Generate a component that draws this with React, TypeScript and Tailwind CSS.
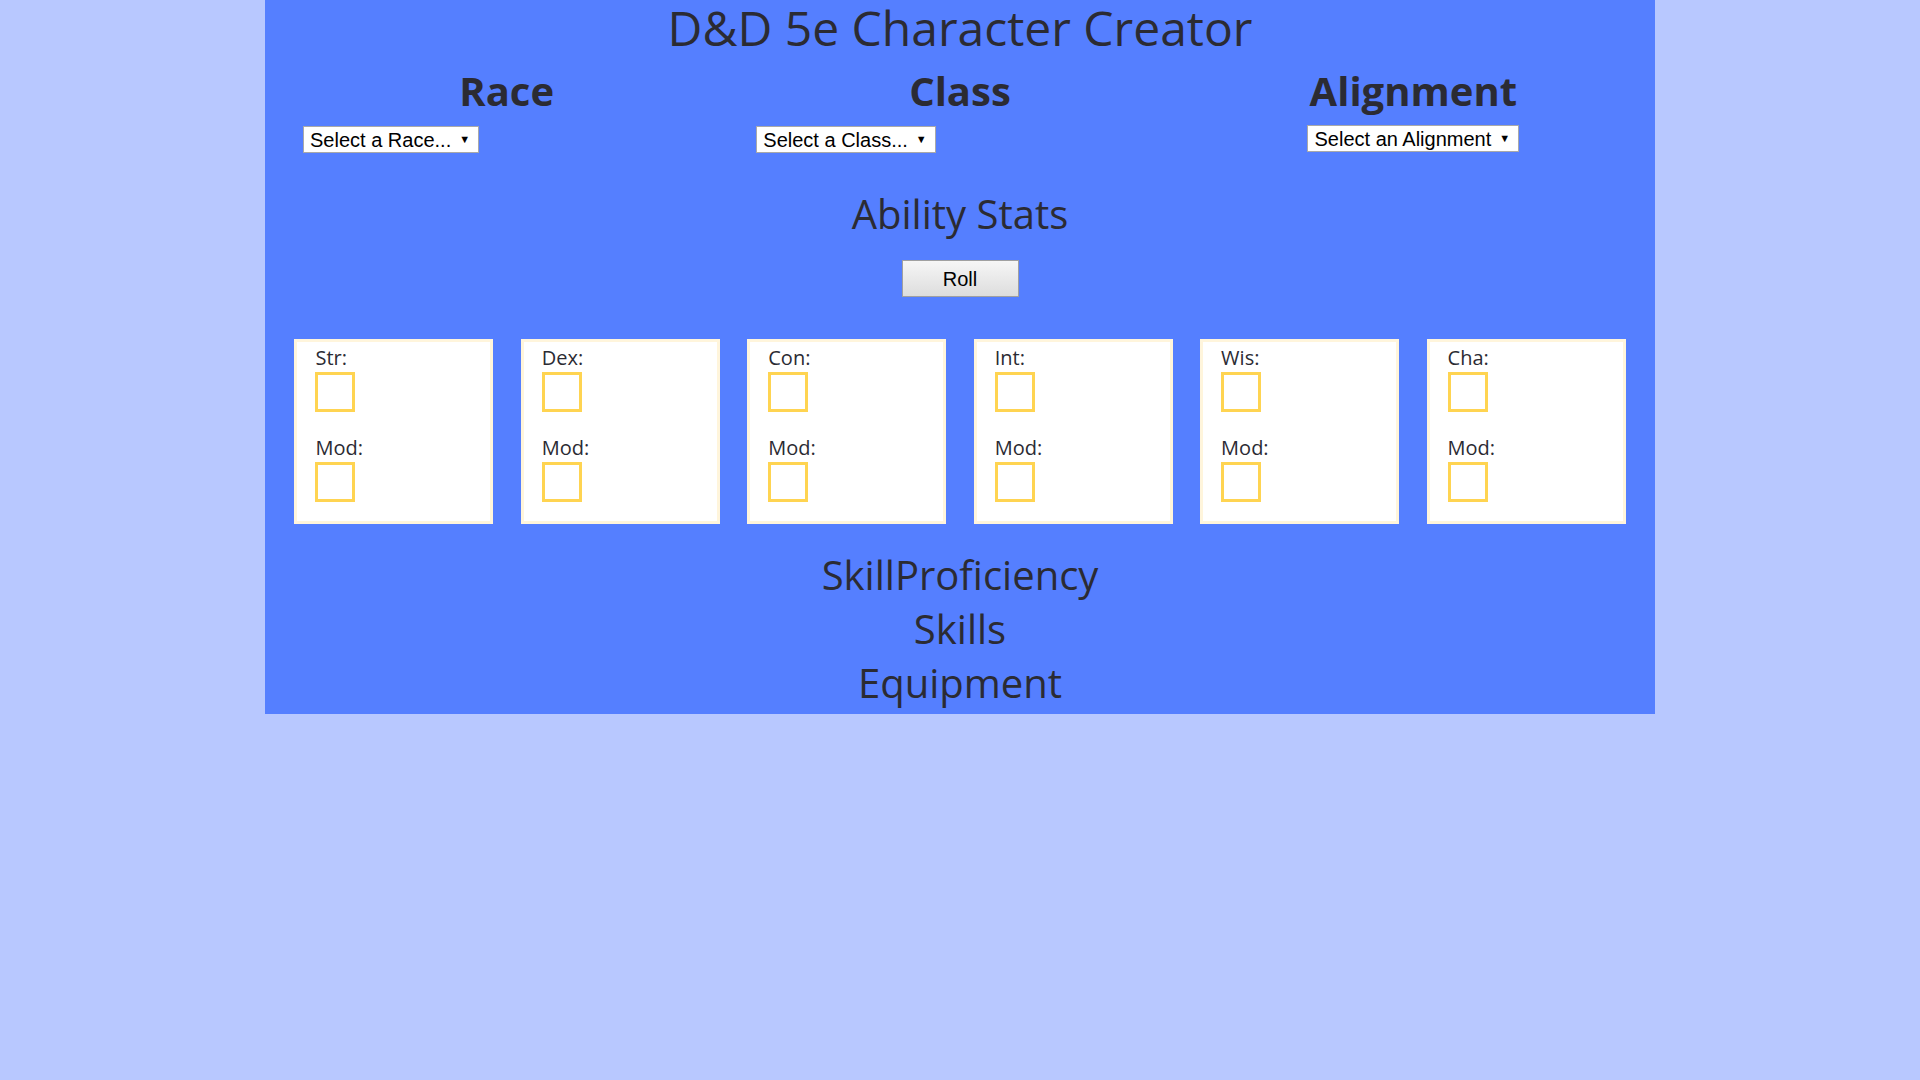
import React from 'react';

const STATS = ['Str', 'Dex', 'Con', 'Int', 'Wis', 'Cha'];

function FakeSelect({ label }: { label: string }) {
  return (
    <div className="inline-flex items-center h-[27px] bg-white border border-[#a9a9a9] pl-[6px] pr-[8px] text-[20px] leading-none text-black font-['Liberation_Sans',Arial,sans-serif] cursor-default select-none">
      <span>{label}</span>
      <span className="ml-[8px] text-[11px] leading-none">▼</span>
    </div>
  );
}

function StatCard({ name }: { name: string }) {
  return (
    <div className="w-[199px] h-[185px] bg-white border-[3px] border-[#fff5dc] pl-[18px] pt-[4px]">
      <div className="text-[20px] leading-[24px]">{name}:</div>
      <input className="block mt-[2px] w-10 h-10 border-[3px] border-[#ffd451] outline-none bg-white" />
      <div className="mt-6 text-[20px] leading-[24px]">Mod:</div>
      <input className="block mt-[2px] w-10 h-10 border-[3px] border-[#ffd451] outline-none bg-white" />
    </div>
  );
}

export default function App() {
  return (
    <div className="min-h-screen bg-[#b8c8ff] font-['Open_Sans','Noto_Sans',sans-serif] text-[#2b2b33]">
      <div className="w-[1390px] mx-auto bg-[#557fff] pb-[4px]">
        {/* タイトル */}
        <h1 className="text-center text-[48px] leading-[56px] font-normal">D&amp;D 5e Character Creator</h1>

        {/* 種族・クラス・属性 */}
        <div className="grid grid-cols-3 mt-[11px] px-[15px]">
          <div>
            <h2 className="text-center text-[40px] leading-[48px] font-bold">Race</h2>
            <div className="mt-[11px] pl-[23px]">
              <FakeSelect label="Select a Race..." />
            </div>
          </div>
          <div>
            <h2 className="text-center text-[40px] leading-[48px] font-bold">Class</h2>
            <div className="mt-[11px] pl-[23px]">
              <FakeSelect label="Select a Class..." />
            </div>
          </div>
          <div>
            <h2 className="text-center text-[40px] leading-[48px] font-bold">Alignment</h2>
            <div className="mt-[10px] flex justify-center">
              <FakeSelect label="Select an Alignment" />
            </div>
          </div>
        </div>

        {/* 能力値 */}
        <h2 className="mt-[37px] text-center text-[40px] leading-[48px] font-normal">Ability Stats</h2>
        <div className="mt-[22px] flex justify-center">
          <button className="w-[117px] h-[37px] border border-[#a0a0a0] bg-gradient-to-b from-[#f6f6f6] to-[#dddddd] text-[20px] text-black font-['Liberation_Sans',Arial,sans-serif]">
            Roll
          </button>
        </div>

        <div className="mt-[42px] px-[2px] flex justify-evenly">
          {STATS.map((s) => (
            <StatCard key={s} name={s} />
          ))}
        </div>

        <div className="mt-[24px] text-center text-[40px] leading-[54px] font-normal">
          <h2>SkillProficiency</h2>
          <h2>Skills</h2>
          <h2>Equipment</h2>
        </div>
      </div>
    </div>
  );
}
